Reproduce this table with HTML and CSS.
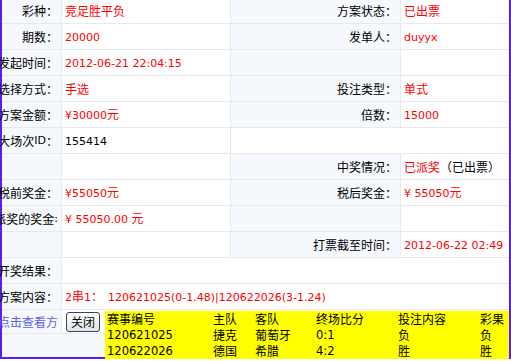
FILE: index.html
```html
<!DOCTYPE html>
<html>
<head>
<meta charset="utf-8">
<link rel="stylesheet" href="styles.css">
</head>
<body>
<div class="frame">
  <table class="info">
    <colgroup><col class="c1"><col class="c2"><col class="c3"><col class="c4"></colgroup>
    <tr>
      <td class="lab"><div class="lw">彩种：</div></td>
      <td class="val red">竞足胜平负</td>
      <td class="lab"><div class="lw">方案状态：</div></td>
      <td class="val red">已出票</td>
    </tr>
    <tr>
      <td class="lab"><div class="lw">期数：</div></td>
      <td class="val red"><span class="n">20000</span></td>
      <td class="lab"><div class="lw">发单人：</div></td>
      <td class="val red"><span class="n">duyyx</span></td>
    </tr>
    <tr>
      <td class="lab"><div class="lw">发起时间：</div></td>
      <td class="val red"><span class="n">2012-06-21 22:04:15</span></td>
      <td class="lab"></td>
      <td class="val"></td>
    </tr>
    <tr>
      <td class="lab"><div class="lw">选择方式：</div></td>
      <td class="val red">手选</td>
      <td class="lab"><div class="lw">投注类型：</div></td>
      <td class="val red">单式</td>
    </tr>
    <tr>
      <td class="lab"><div class="lw">方案金额：</div></td>
      <td class="val red"><span class="n">¥30000</span>元</td>
      <td class="lab"><div class="lw">倍数：</div></td>
      <td class="val red"><span class="n">15000</span></td>
    </tr>
    <tr>
      <td class="lab"><div class="lw">大场次<span class="n">ID</span>：</div></td>
      <td class="val"><span class="n">155414</span></td>
      <td class="val" colspan="2"></td>
    </tr>
    <tr>
      <td class="lab"></td>
      <td class="val"></td>
      <td class="lab"><div class="lw">中奖情况：</div></td>
      <td class="val"><span class="red">已派奖</span>（已出票）</td>
    </tr>
    <tr>
      <td class="lab"><div class="lw">税前奖金：</div></td>
      <td class="val red"><span class="n">¥55050</span>元</td>
      <td class="lab"><div class="lw">税后奖金：</div></td>
      <td class="val red"><span class="n">¥ 55050</span>元</td>
    </tr>
    <tr>
      <td class="lab"><div class="lw">派奖的奖金<span class="n">:</span></div></td>
      <td class="val red"><span class="n">¥ 55050.00 </span>元</td>
      <td class="lab"></td>
      <td class="val"></td>
    </tr>
    <tr>
      <td class="lab"></td>
      <td class="val"></td>
      <td class="lab"><div class="lw">打票截至时间：</div></td>
      <td class="val red"><span class="n">2012-06-22 02:49</span></td>
    </tr>
    <tr>
      <td class="lab"><div class="lw">开奖结果：</div></td>
      <td class="val" colspan="3"></td>
    </tr>
    <tr>
      <td class="lab"><div class="lw">方案内容：</div></td>
      <td class="val red" colspan="3"><span class="n">2</span>串<span class="n">1</span>：<span class="n plan">120621025(0-1.48)|120622026(3-1.24)</span></td>
    </tr>
    <tr class="last">
      <td class="lab"><div class="lw"><a class="link" href="#">点击查看方</a></div></td>
      <td class="val act" colspan="3">
        <button class="btn" type="button">关闭</button>
        <div class="popup">
          <span>赛事编号</span><span>主队</span><span>客队</span><span>终场比分</span><span>投注内容</span><span>彩果</span>
          <span class="n">120621025</span><span>捷克</span><span>葡萄牙</span><span class="n">0:1</span><span>负</span><span>负</span>
          <span class="n">120622026</span><span>德国</span><span>希腊</span><span class="n">4:2</span><span>胜</span><span>胜</span>
        </div>
      </td>
    </tr>
  </table>
</div>
</body>
</html>
```
FILE: styles.css
```css
html, body {
  margin: 0;
  padding: 0;
  overflow: hidden;
  background: #ffffff;
}

body {
  font-family: "Noto Sans CJK SC", "DejaVu Sans", sans-serif;
  font-size: 12px;
  color: #000;
}

.frame {
  width: 511px;
  height: 361px;
  box-sizing: border-box;
  border: 2px solid #5b1df0;
  border-top: 0;
  background: #f5f8fc;
}

.info {
  width: 507px;
  margin-top: -2px;
  table-layout: fixed;
  border-collapse: separate;
  border-spacing: 0;
}

.c1 { width: 60px; }
.c2 { width: 169px; }
.c3 { width: 170px; }
.c4 { width: 108px; }

.info td {
  box-sizing: border-box;
  height: 26px;
  padding: 0;
  border-right: 1px solid #e6e9ee;
  border-bottom: 1px solid #e6e9ee;
  white-space: nowrap;
  vertical-align: middle;
  line-height: 16px;
}

.info td:last-child {
  border-right: 0;
}

.info tr.last td {
  height: 24px;
}

.lab {
  background: #f5f8fc;
}

.lw {
  display: flex;
  justify-content: flex-end;
  padding-right: 3px;
  white-space: nowrap;
}

.val {
  background: #ffffff;
  padding-left: 3px !important;
}

.red {
  color: #ff0000;
}

.n {
  font-family: "DejaVu Sans", sans-serif;
  font-size: 11px;
}

.plan {
  margin-left: 5px;
}

.link {
  color: #6060dc;
  text-decoration: none;
}

.act {
  position: relative;
}

.btn {
  display: block;
  width: 34px;
  height: 20px;
  margin: 1px 0 0 1px;
  padding: 0;
  box-sizing: border-box;
  border: 1px solid #2a4868;
  border-radius: 3px;
  background: linear-gradient(#ffffff, #e4e4e4);
  font-family: "Noto Sans CJK SC", sans-serif;
  font-size: 12px;
  line-height: 16px;
  color: #000;
}

.popup {
  position: absolute;
  left: 43px;
  top: 1px;
  width: 404px;
  display: grid;
  grid-template-columns: 106px 42px 61px 82px 82px 31px;
  grid-auto-rows: 16px;
  background: #ffff00;
  line-height: 16px;
}

.popup span {
  padding-left: 2px;
  white-space: nowrap;
  color: #000;
}

.popup span.n {
  font-size: 11.5px;
}
```
